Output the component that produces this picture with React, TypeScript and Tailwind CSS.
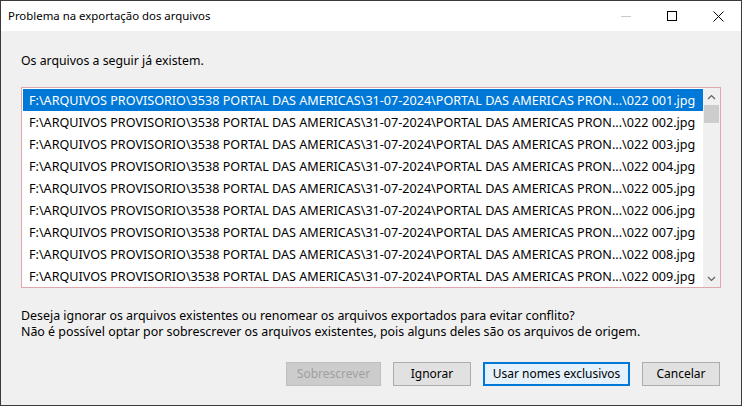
const rows = Array.from({ length: 9 }, (_, i) => `F:\\ARQUIVOS PROVISORIO\\3538 PORTAL DAS AMERICAS\\31-07-2024\\PORTAL DAS AMERICAS PRON...\\022 00${i + 1}.jpg`)

function ScrollBar() {
  return (
    <div className="flex w-[17px] shrink-0 flex-col bg-[#f0f0f0]">
      <div className="flex h-[17px] items-center justify-center">
        <svg width="9" height="6" viewBox="0 0 9 6" className="text-[#606060]">
          <path d="M1 5 L4.5 1.5 L8 5" fill="none" stroke="currentColor" strokeWidth="1.2" />
        </svg>
      </div>
      <div className="mx-[1px] h-[18px] bg-[#cdcdcd]" />
      <div className="flex-1" />
      <div className="flex h-[17px] items-center justify-center">
        <svg width="9" height="6" viewBox="0 0 9 6" className="text-[#606060]">
          <path d="M1 1 L4.5 4.5 L8 1" fill="none" stroke="currentColor" strokeWidth="1.2" />
        </svg>
      </div>
    </div>
  )
}

export default function App() {
  return (
    <div className="flex h-[406px] w-[742px] flex-col border border-[#3a3a3a] bg-[#f0f0f0] font-['Noto_Sans',sans-serif] text-[12px] text-black">
      <div className="flex h-[30px] shrink-0 items-center bg-white">
        <span className="flex-1 pl-[7px] text-[11.4px]">Problema na exportação dos arquivos</span>
        <div className="flex h-full w-[46px] items-center justify-center">
          <div className="h-px w-[10px] bg-[#c8c8c8]" />
        </div>
        <div className="flex h-full w-[46px] items-center justify-center">
          <div className="h-[10px] w-[10px] border border-black" />
        </div>
        <div className="flex h-full w-[46px] items-center justify-center">
          <svg width="11" height="11" viewBox="0 0 11 11">
            <path d="M0.5 0.5 L10.5 10.5 M10.5 0.5 L0.5 10.5" stroke="black" strokeWidth="1" />
          </svg>
        </div>
      </div>

      <div className="flex flex-1 flex-col px-[20px]">
        <p className="mt-[20px] text-[12.3px] leading-[20px]">Os arquivos a seguir já existem.</p>

        <div className="mt-[16px] flex h-[201px] border border-[#e0a8ae] bg-white">
          <div className="flex-1 pt-[1px] pl-[1px]">
            {rows.map((r, i) => (
              <div
                key={r}
                className={`h-[22px] whitespace-nowrap pl-[6px] text-[12.6px] leading-[23px] ${i === 0 ? 'bg-[#0078d7] text-white' : ''}`}
              >
                {r}
              </div>
            ))}
          </div>
          <ScrollBar />
        </div>

        <div className="mt-[20px] text-[12.4px] leading-[16px]">
          <p>Deseja ignorar os arquivos existentes ou renomear os arquivos exportados para evitar conflito?</p>
          <p>Não é possível optar por sobrescrever os arquivos existentes, pois alguns deles são os arquivos de origem.</p>
        </div>

        <div className="mt-[22px] flex justify-end gap-[12px] pr-[1px]">
          <button className="h-[24px] w-[95px] border border-[#bfbfbf] bg-[#cccccc] text-[#a0a0a0]">Sobrescrever</button>
          <button className="h-[24px] w-[78px] border border-[#adadad] bg-[#e1e1e1]">Ignorar</button>
          <button className="h-[24px] w-[147px] border-2 border-[#0078d7] bg-[#e5f1fb]">Usar nomes exclusivos</button>
          <button className="h-[24px] w-[78px] border border-[#adadad] bg-[#e1e1e1]">Cancelar</button>
        </div>
      </div>
    </div>
  )
}
